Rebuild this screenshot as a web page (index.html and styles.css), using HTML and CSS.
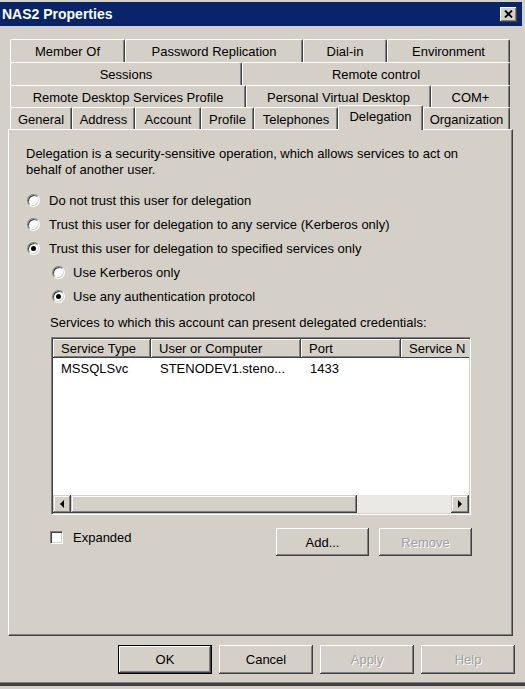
FILE: index.html
```html
<!DOCTYPE html>
<html>
<head>
<meta charset="utf-8">
<title>NAS2 Properties</title>
<link rel="stylesheet" href="styles.css">
</head>
<body>
<div class="window">
  <div class="titlebar">
    <span class="title">NAS2 Properties</span>
    <span class="close"><svg width="9" height="8" viewBox="0 0 9 8"><path d="M1 0.5 L8 7.5 M8 0.5 L1 7.5" stroke="#000" stroke-width="1.8" fill="none"/></svg></span>
  </div>

  <div class="tabs">
    <div class="tabrow r1">
      <div class="tab w115">Member Of</div>
      <div class="tab w178">Password Replication</div>
      <div class="tab w84">Dial-in</div>
      <div class="tab w123">Environment</div>
    </div>
    <div class="tabrow r2">
      <div class="tab w232">Sessions</div>
      <div class="tab w268">Remote control</div>
    </div>
    <div class="tabrow r3">
      <div class="tab w236">Remote Desktop Services Profile</div>
      <div class="tab w185">Personal Virtual Desktop</div>
      <div class="tab w79">COM+</div>
    </div>
    <div class="tabrow r4">
      <div class="tab w62">General</div>
      <div class="tab w63">Address</div>
      <div class="tab w66">Account</div>
      <div class="tab w53">Profile</div>
      <div class="tab w84">Telephones</div>
      <div class="tab w85 sel">Delegation</div>
      <div class="tab w87">Organization</div>
    </div>
  </div>

  <div class="panel">
    <p class="desc">Delegation is a security-sensitive operation, which allows services to act on behalf of another user.</p>

    <div class="opt"><span class="radio"></span><span>Do not trust this user for delegation</span></div>
    <div class="opt"><span class="radio"></span><span>Trust this user for delegation to any service (Kerberos only)</span></div>
    <div class="opt"><span class="radio on"></span><span>Trust this user for delegation to specified services only</span></div>
    <div class="opt sub"><span class="radio"></span><span>Use Kerberos only</span></div>
    <div class="opt sub"><span class="radio on"></span><span>Use any authentication protocol</span></div>

    <p class="svc-label">Services to which this account can present delegated credentials:</p>

    <div class="listview">
      <div class="lv-header">
        <div class="hcell c1">Service Type</div>
        <div class="hcell c2">User or Computer</div>
        <div class="hcell c3">Port</div>
        <div class="hcell c4">Service N</div>
      </div>
      <div class="lv-body">
        <div class="lrow">
          <div class="cell c1">MSSQLSvc</div>
          <div class="cell c2">STENODEV1.steno...</div>
          <div class="cell c3">1433</div>
          <div class="cell c4"></div>
        </div>
      </div>
      <div class="hscroll">
        <div class="sbtn"><span class="tri-left"></span></div>
        <div class="thumb"></div>
        <div class="track"></div>
        <div class="sbtn"><span class="tri-right"></span></div>
      </div>
    </div>

    <div class="list-actions">
      <div class="check-group"><span class="checkbox"></span><span>Expanded</span></div>
      <div class="btn-group">
        <button class="btn small">Add...</button>
        <button class="btn small disabled">Remove</button>
      </div>
    </div>
  </div>

  <div class="footer">
    <button class="btn default">OK</button>
    <button class="btn">Cancel</button>
    <button class="btn disabled">Apply</button>
    <button class="btn disabled">Help</button>
  </div>
  <div class="frame-bottom"></div>
</div>
</body>
</html>
```

FILE: styles.css
```css
html, body {
  margin: 0;
  padding: 0;
}
body {
  background: #d4d0c8;
  font-family: "Liberation Sans", Arial, sans-serif;
  font-size: 13px;
  color: #000;
}
.window {
  width: 525px;
  height: 689px;
  box-sizing: border-box;
  padding-top: 2px;
  display: flex;
  flex-direction: column;
}
.titlebar {
  width: 522px;
  height: 24px;
  box-sizing: border-box;
  background: #0a246a;
  color: #fff;
  display: flex;
  align-items: center;
  justify-content: space-between;
  padding: 0 5px 0 2px;
}
.title {
  font-weight: bold;
  font-size: 14px;
}
.close {
  width: 17px;
  height: 15px;
  box-sizing: border-box;
  background: #d4d0c8;
  box-shadow: inset -1px -1px #404040, inset 1px 1px #fff, inset -2px -2px #808080;
  display: flex;
  align-items: center;
  justify-content: center;
}
.close svg { display: block; }

/* tabs */
.tabs {
  margin: 13px 0 0 10px;
  width: 500px;
}
.tabrow {
  display: flex;
  height: 23px;
}
.tabrow.r3, .tabrow.r4 { height: 22px; }
.tab {
  box-sizing: border-box;
  height: 100%;
  border-top: 1px solid #fff;
  border-left: 1px solid #fff;
  border-right: 1px solid #404040;
  box-shadow: inset -1px 0 #808080;
  border-radius: 2px 2px 0 0;
  display: flex;
  align-items: center;
  justify-content: center;
  padding-top: 1px;
  white-space: nowrap;
  background: #d4d0c8;
}
.tab.sel {
  position: relative;
  z-index: 1;
  height: calc(100% + 3px);
  margin-top: -2px;
  padding-top: 0;
  padding-bottom: 3px;
}
.w53 { width: 53px; } .w62 { width: 62px; } .w63 { width: 63px; }
.w66 { width: 66px; } .w79 { width: 79px; } .w84 { width: 84px; }
.w85 { width: 85px; } .w87 { width: 87px; } .w115 { width: 115px; }
.w123 { width: 123px; } .w178 { width: 178px; } .w185 { width: 185px; }
.w232 { width: 232px; } .w236 { width: 236px; } .w268 { width: 268px; }

/* panel */
.panel {
  margin-left: 8px;
  width: 505px;
  height: 507px;
  box-sizing: border-box;
  border-top: 1px solid #fff;
  border-left: 1px solid #fff;
  border-right: 1px solid #404040;
  border-bottom: 1px solid #404040;
  box-shadow: inset -1px -1px #808080;
  padding: 16px 0 0 17px;
}
.desc {
  margin: 0;
  width: 470px;
  line-height: 16px;
}
.opt {
  display: flex;
  align-items: center;
  height: 24px;
  gap: 9px;
  margin-left: 1px;
  white-space: nowrap;
}
.opt:first-of-type { margin-top: 10px; }
.opt.sub {
  margin-left: 26px;
  gap: 8px;
}
.radio {
  width: 13px;
  height: 13px;
  box-sizing: border-box;
  border-radius: 50%;
  background: #fff;
  border: 1px solid;
  border-color: #808080 #fff #fff #808080;
  box-shadow: inset 1px 1px #404040, inset -1px -1px #d4d0c8;
  display: flex;
  align-items: center;
  justify-content: center;
  flex: none;
}
.radio.on::after {
  content: "";
  width: 5px;
  height: 5px;
  border-radius: 50%;
  background: #000;
}
.svc-label {
  margin: 7px 0 0 24px;
  line-height: 16px;
  white-space: nowrap;
}

/* list view */
.listview {
  margin: 6px 0 0 25px;
  width: 420px;
  height: 178px;
  box-sizing: border-box;
  border: 1px solid;
  border-color: #808080 #fff #fff #808080;
  box-shadow: inset 1px 1px #404040, inset -1px -1px #d4d0c8;
  padding: 1px;
  display: flex;
  flex-direction: column;
  background: #fff;
}
.lv-header {
  display: flex;
  height: 19px;
  overflow: hidden;
  flex: none;
  background: #d4d0c8;
}
.hcell {
  box-sizing: border-box;
  height: 19px;
  flex: none;
  border-right: 1px solid #404040;
  border-bottom: 1px solid #404040;
  box-shadow: inset 1px 1px #fff, inset -1px -1px #808080;
  padding: 1px 0 0 8px;
  line-height: 17px;
  white-space: nowrap;
}
.hcell.c4 {
  flex: 1;
  width: auto;
  border-right: none;
  box-shadow: inset 1px 1px #fff;
}
.c1 { width: 98px; }
.c2 { width: 150px; }
.c3 { width: 100px; }
.c4 { width: 66px; }
.lv-body {
  flex: 1;
  padding-top: 2px;
  overflow: hidden;
}
.lrow {
  display: flex;
  height: 17px;
  line-height: 17px;
}
.cell {
  box-sizing: border-box;
  flex: none;
  padding-left: 8px;
  white-space: nowrap;
}
.cell.c2, .cell.c3 { padding-left: 9px; }
.hscroll {
  display: flex;
  height: 18px;
  flex: none;
  background: #d4d0c8;
}
.sbtn {
  width: 18px;
  height: 18px;
  box-sizing: border-box;
  background: #d4d0c8;
  box-shadow: inset -1px -1px #404040, inset 1px 1px #d4d0c8, inset -2px -2px #808080, inset 2px 2px #fff;
  display: flex;
  align-items: center;
  justify-content: center;
  flex: none;
}
.tri-left {
  width: 0;
  height: 0;
  border-top: 4px solid transparent;
  border-bottom: 4px solid transparent;
  border-right: 4px solid #000;
}
.tri-right {
  width: 0;
  height: 0;
  border-top: 4px solid transparent;
  border-bottom: 4px solid transparent;
  border-left: 4px solid #000;
}
.thumb {
  width: 286px;
  height: 18px;
  box-sizing: border-box;
  background: #d4d0c8;
  box-shadow: inset -1px -1px #404040, inset 1px 1px #d4d0c8, inset -2px -2px #808080, inset 2px 2px #fff;
  flex: none;
}
.track {
  flex: 1;
  background: #ebe9e5;
}

.list-actions {
  margin: 13px 0 0 24px;
  width: 422px;
  display: flex;
  justify-content: space-between;
  align-items: flex-start;
}
.check-group {
  display: flex;
  align-items: center;
  gap: 10px;
  margin-top: 1px;
  height: 16px;
}
.checkbox {
  width: 13px;
  height: 13px;
  box-sizing: border-box;
  background: #fff;
  border: 1px solid;
  border-color: #808080 #fff #fff #808080;
  box-shadow: inset 1px 1px #404040, inset -1px -1px #d4d0c8;
}
.btn-group {
  display: flex;
  gap: 10px;
}

/* buttons */
.btn {
  width: 94px;
  height: 29px;
  box-sizing: border-box;
  background: #d4d0c8;
  border: none;
  margin: 0;
  padding: 0;
  font-family: inherit;
  font-size: 13px;
  color: #000;
  box-shadow: inset -1px -1px #404040, inset 1px 1px #fff, inset -2px -2px #808080, inset 2px 2px #d4d0c8;
}
.btn.small { width: 93px; height: 28px; }
.btn.default {
  border: 1px solid #000;
}
.btn.disabled {
  color: #a0a0a0;
  text-shadow: 1px 1px #fff;
}
.footer {
  display: flex;
  justify-content: flex-end;
  gap: 7px;
  padding-right: 10px;
  margin-top: 9px;
}
.frame-bottom {
  margin-top: auto;
  height: 3px;
  margin-bottom: 3px;
  background: #404040;
  border-top: 1px solid #808080;
}
```
